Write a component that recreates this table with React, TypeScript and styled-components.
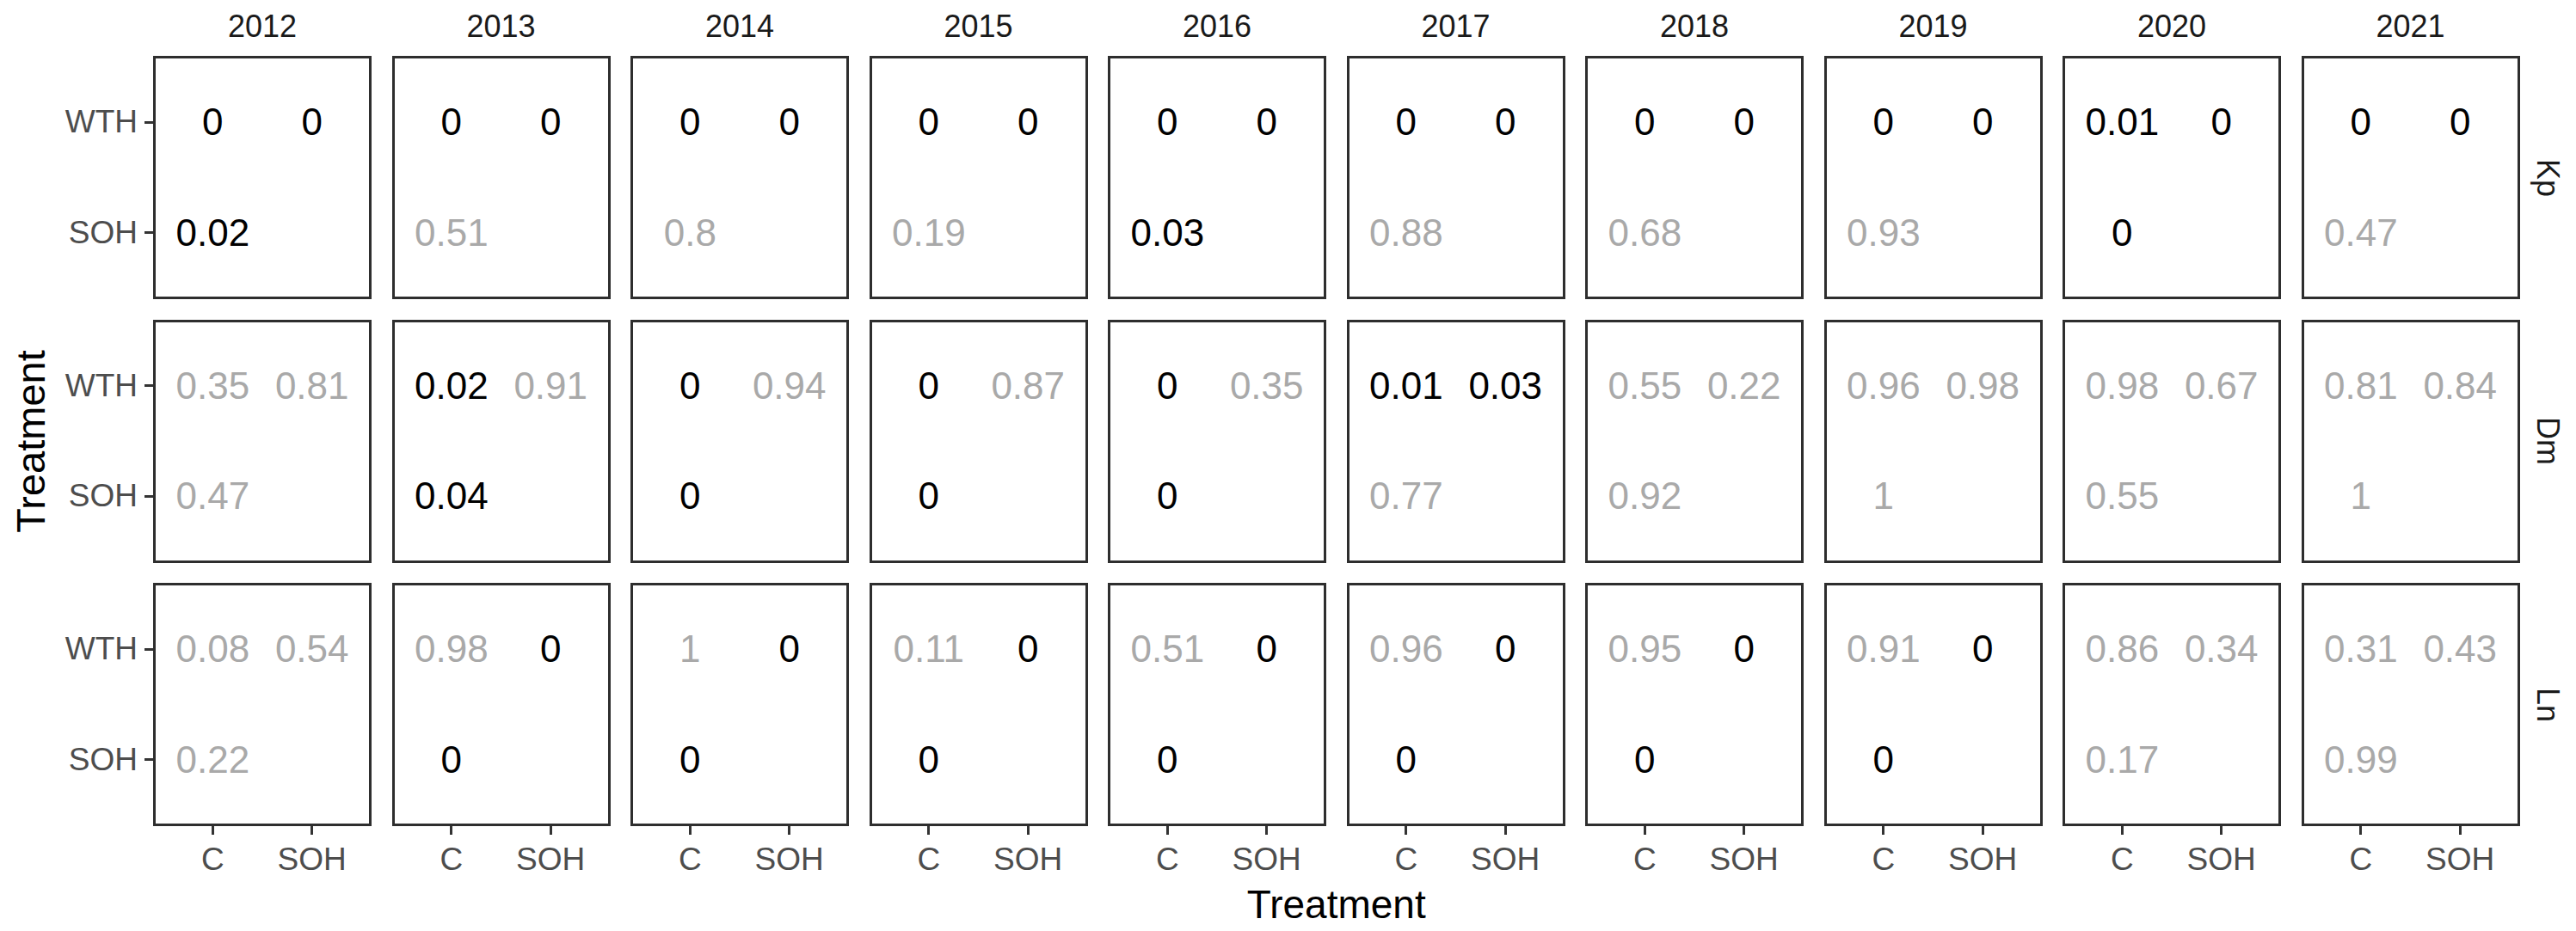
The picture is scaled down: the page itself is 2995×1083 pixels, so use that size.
import React from 'react';
import styled, { createGlobalStyle } from 'styled-components';

const PANEL_W = 254;
const PANEL_H = 283;
const SPACING = 23.5;

const GlobalStyle = createGlobalStyle`
  html, body {
    margin: 0;
    padding: 0;
    background: #ffffff;
  }
  body {
    font-family: "Liberation Sans", Arial, sans-serif;
  }
`;

const Figure = styled.div`
  display: grid;
  grid-template-columns: 70px 108px ${PANEL_W * 10 + SPACING * 9}px 65px;
  grid-template-rows: 65px ${PANEL_H * 3 + SPACING * 2}px auto auto;
  width: 2995px;
  height: 1083px;
  background: #ffffff;
`;

const StripTop = styled.div`
  grid-column: 3;
  grid-row: 1;
  display: grid;
  grid-template-columns: repeat(10, ${PANEL_W}px);
  column-gap: ${SPACING}px;
  padding-bottom: 4px;
`;

const StripLabel = styled.div`
  display: flex;
  align-items: center;
  justify-content: center;
  font-size: 36px;
  color: #1a1a1a;
`;

const YTitleCell = styled.div`
  grid-column: 1;
  grid-row: 2;
  display: flex;
  align-items: center;
  justify-content: center;
`;

const YTitle = styled.span`
  display: inline-block;
  white-space: nowrap;
  font-size: 47px;
  color: #000000;
  transform: rotate(-90deg);
`;

const YAxisColumn = styled.div`
  grid-column: 2;
  grid-row: 2;
  display: flex;
  flex-direction: column;
  gap: ${SPACING}px;
`;

const YAxisBlock = styled.div`
  height: ${PANEL_H}px;
  box-sizing: border-box;
  padding: 12.9px 0;
  display: grid;
  grid-template-rows: 1fr 1fr;
`;

const YTickItem = styled.div`
  display: flex;
  align-items: center;
  justify-content: flex-end;
  font-size: 37px;
  color: #4d4d4d;
`;

const YTickMark = styled.span`
  width: 10px;
  height: 3px;
  margin-left: 8px;
  background: #333333;
`;

const PanelGrid = styled.div`
  grid-column: 3;
  grid-row: 2;
  display: grid;
  grid-template-columns: repeat(10, ${PANEL_W}px);
  grid-template-rows: repeat(3, ${PANEL_H}px);
  gap: ${SPACING}px;
`;

const Panel = styled.div`
  box-sizing: border-box;
  border: 3px solid #2e2e2e;
  padding: 9.9px 8.6px;
  display: grid;
  grid-template-columns: 1fr 1fr;
  grid-template-rows: 1fr 1fr;
`;

const Value = styled.div<{ $sig: boolean }>`
  display: flex;
  align-items: center;
  justify-content: center;
  white-space: nowrap;
  font-size: 44px;
  color: ${(p) => (p.$sig ? '#000000' : '#a9a9a9')};
`;

const RowStrips = styled.div`
  grid-column: 4;
  grid-row: 2;
  display: flex;
  flex-direction: column;
  gap: ${SPACING}px;
`;

const RowStrip = styled.div`
  height: ${PANEL_H}px;
  display: flex;
  align-items: center;
  justify-content: center;
`;

const RowStripText = styled.span`
  display: inline-block;
  white-space: nowrap;
  font-size: 36px;
  color: #1a1a1a;
  transform: rotate(90deg);
`;

const XAxisRow = styled.div`
  grid-column: 3;
  grid-row: 3;
  display: grid;
  grid-template-columns: repeat(10, ${PANEL_W}px);
  column-gap: ${SPACING}px;
`;

const XAxisBlock = styled.div`
  display: grid;
  grid-template-columns: 1fr 1fr;
  padding: 0 11.6px;
`;

const XTickItem = styled.div`
  display: flex;
  flex-direction: column;
  align-items: center;
  font-size: 37px;
  color: #4d4d4d;
`;

const XTickMark = styled.span`
  width: 3px;
  height: 10px;
  margin-bottom: 7.5px;
  background: #333333;
`;

const XTitle = styled.div`
  grid-column: 3;
  grid-row: 4;
  text-align: center;
  font-size: 46px;
  color: #000000;
`;

const years = ['2012', '2013', '2014', '2015', '2016', '2017', '2018', '2019', '2020', '2021'];

// per year: [WTH vs C, WTH vs SOH, SOH vs C]
const facets: { name: string; cells: string[][] }[] = [
  {
    name: 'Kp',
    cells: [
      ['0', '0', '0.02'],
      ['0', '0', '0.51'],
      ['0', '0', '0.8'],
      ['0', '0', '0.19'],
      ['0', '0', '0.03'],
      ['0', '0', '0.88'],
      ['0', '0', '0.68'],
      ['0', '0', '0.93'],
      ['0.01', '0', '0'],
      ['0', '0', '0.47'],
    ],
  },
  {
    name: 'Dm',
    cells: [
      ['0.35', '0.81', '0.47'],
      ['0.02', '0.91', '0.04'],
      ['0', '0.94', '0'],
      ['0', '0.87', '0'],
      ['0', '0.35', '0'],
      ['0.01', '0.03', '0.77'],
      ['0.55', '0.22', '0.92'],
      ['0.96', '0.98', '1'],
      ['0.98', '0.67', '0.55'],
      ['0.81', '0.84', '1'],
    ],
  },
  {
    name: 'Ln',
    cells: [
      ['0.08', '0.54', '0.22'],
      ['0.98', '0', '0'],
      ['1', '0', '0'],
      ['0.11', '0', '0'],
      ['0.51', '0', '0'],
      ['0.96', '0', '0'],
      ['0.95', '0', '0'],
      ['0.91', '0', '0'],
      ['0.86', '0.34', '0.17'],
      ['0.31', '0.43', '0.99'],
    ],
  },
];

const isSig = (v: string) => parseFloat(v) < 0.05;

const Cell: React.FC<{ value?: string }> = ({ value }) =>
  value ? <Value $sig={isSig(value)}>{value}</Value> : <div />;

const App: React.FC = () => {
  return (
    <>
      <GlobalStyle />
      <Figure>
        <StripTop>
          {years.map((y) => (
            <StripLabel key={y}>{y}</StripLabel>
          ))}
        </StripTop>

        <YTitleCell>
          <YTitle>Treatment</YTitle>
        </YTitleCell>

        <YAxisColumn>
          {facets.map((f) => (
            <YAxisBlock key={f.name}>
              <YTickItem>
                WTH
                <YTickMark />
              </YTickItem>
              <YTickItem>
                SOH
                <YTickMark />
              </YTickItem>
            </YAxisBlock>
          ))}
        </YAxisColumn>

        <PanelGrid>
          {facets.map((f) =>
            f.cells.map((c, i) => (
              <Panel key={`${f.name}-${years[i]}`}>
                <Cell value={c[0]} />
                <Cell value={c[1]} />
                <Cell value={c[2]} />
                <Cell />
              </Panel>
            ))
          )}
        </PanelGrid>

        <RowStrips>
          {facets.map((f) => (
            <RowStrip key={f.name}>
              <RowStripText>{f.name}</RowStripText>
            </RowStrip>
          ))}
        </RowStrips>

        <XAxisRow>
          {years.map((y) => (
            <XAxisBlock key={y}>
              <XTickItem>
                <XTickMark />
                C
              </XTickItem>
              <XTickItem>
                <XTickMark />
                SOH
              </XTickItem>
            </XAxisBlock>
          ))}
        </XAxisRow>

        <XTitle>Treatment</XTitle>
      </Figure>
    </>
  );
};

export default App;
